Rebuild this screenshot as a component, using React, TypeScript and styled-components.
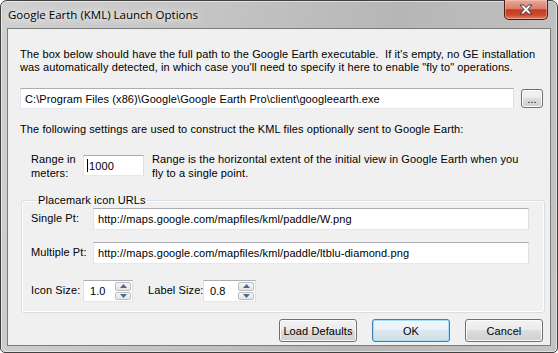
import styled, {createGlobalStyle} from 'styled-components';

const GlobalStyle = createGlobalStyle`
  html, body {
    margin: 0;
    padding: 0;
  }

  body {
    width: 558px;
    height: 353px;
    overflow: hidden;
    background: #ffffff;
    font-family: "Liberation Sans", Arial, sans-serif;
  }
`;

const Window = styled.div`
  box-sizing: border-box;
  width: 558px;
  height: 353px;
  display: flex;
  flex-direction: column;
  border: 1px solid #414141;
  border-radius: 7px 7px 5px 5px;
  padding: 0 6px 6px;
  background: linear-gradient(100deg, #d0d0d0 0%, #c4c4c4 35%, #b6b6b6 65%, #c4c4c4 100%);
  box-shadow: inset 0 0 0 1px rgba(255, 255, 255, 0.5);
`;

const TitleBar = styled.div`
  height: 27px;
  display: flex;
  align-items: center;
  justify-content: space-between;
  padding-left: 1px;
`;

const Title = styled.span`
  font-family: "Open Sans", "Noto Sans", sans-serif;
  font-size: 11.5px;
  color: #000;
  text-shadow: 0 0 6px #fff, 0 0 10px rgba(255, 255, 255, 0.8);
`;

const CloseButton = styled.div`
  align-self: flex-start;
  margin-top: -1px;
  margin-right: 3px;
  box-sizing: border-box;
  width: 44px;
  height: 20px;
  border: 1px solid #4d1a12;
  border-top: none;
  border-radius: 0 0 5px 5px;
  background: linear-gradient(#eaa898 0%, #d8806c 45%, #c23b20 52%, #cf4a2c 80%, #e0876c 100%);
  box-shadow: inset 0 0 0 1px rgba(255, 210, 200, 0.45);
  display: flex;
  align-items: center;
  justify-content: center;
`;

const Client = styled.div`
  flex: 1;
  display: flex;
  flex-direction: column;
  border: 1px solid #7b7b7b;
  background: #f0f0f0;
  padding: 19px 7px 0 12px;
  font-size: 11px;
  letter-spacing: 0.1px;
  color: #000;
`;

const Text = styled.div<{$top?: number}>`
  margin-top: ${p => p.$top ?? 0}px;
  line-height: 13px;
  white-space: pre;
`;

const Row = styled.div<{$top?: number; $indent?: number; $gap?: number; $align?: string}>`
  display: flex;
  align-items: ${p => p.$align ?? 'center'};
  gap: ${p => p.$gap ?? 0}px;
  margin-top: ${p => p.$top ?? 0}px;
  padding-left: ${p => p.$indent ?? 0}px;
`;

const Field = styled.div<{$width?: number; $height?: number; $top?: number}>`
  box-sizing: border-box;
  display: flex;
  align-items: center;
  ${p => (p.$width ? `width: ${p.$width}px;` : 'flex: 1;')}
  height: ${p => p.$height ?? 21}px;
  margin-top: ${p => p.$top ?? 0}px;
  padding: 0 4px;
  background: #fff;
  border: 1px solid;
  border-color: #abadb3 #dbdfe6 #e3e9ef #e2e3ea;
  white-space: pre;
`;

const Caret = styled.span`
  width: 1px;
  height: 13px;
  margin: 0 1px 0 -1px;
  background: #000;
`;

const Button = styled.div<{$width: number; $height?: number; $default?: boolean}>`
  box-sizing: border-box;
  width: ${p => p.$width}px;
  height: ${p => p.$height ?? 23}px;
  display: flex;
  align-items: center;
  justify-content: center;
  border: 1px solid ${p => (p.$default ? '#3c7fb1' : '#707070')};
  border-radius: 3px;
  background: ${p =>
    p.$default
      ? 'linear-gradient(#f1f8fc 0%, #e9f1f6 49%, #dde7ee 50%, #d0dde6 100%)'
      : 'linear-gradient(#f2f2f2 0%, #ebebeb 49%, #dddddd 50%, #cfcfcf 100%)'};
  box-shadow: inset 0 0 0 1px ${p => (p.$default ? '#a6def7' : '#fbfbfb')};
`;

const Label = styled.div<{$width: number; $left?: number}>`
  width: ${p => p.$width}px;
  margin-left: ${p => p.$left ?? 0}px;
  flex: none;
  line-height: 13.5px;
  white-space: nowrap;
`;

const GroupBox = styled.fieldset`
  margin: 14px -2px 0 1px;
  padding: 0 15px 10px 9px;
  border: 1px solid #d5dfe5;
  border-radius: 3px;
  box-shadow: inset 0 0 0 1px #fff;
`;

const Legend = styled.legend`
  margin-left: 6px;
  padding: 0 1px;
  line-height: 13px;
`;

const Spinner = styled.div<{$width: number}>`
  box-sizing: border-box;
  width: ${p => p.$width}px;
  height: 22px;
  display: flex;
  align-items: stretch;
  background: #fff;
  border: 1px solid;
  border-color: #abadb3 #dbdfe6 #e3e9ef #e2e3ea;
`;

const SpinValue = styled.div`
  flex: 1;
  display: flex;
  align-items: center;
  padding-left: 6px;
`;

const SpinArrows = styled.div`
  width: 16px;
  display: flex;
  flex-direction: column;
  gap: 1px;
  padding: 1px;
`;

const SpinArrow = styled.div`
  flex: 1;
  display: flex;
  align-items: center;
  justify-content: center;
  border: 1px solid #bdbdbd;
  border-radius: 2px;
  background: linear-gradient(#f6f6f6, #e4e4e4);
`;

const ButtonRow = styled.div`
  display: flex;
  justify-content: flex-end;
  gap: 15px;
  margin-top: 6px;
`;

function CloseGlyph() {
  return (
    <svg width="14" height="11" viewBox="0 0 14 11">
      <path
        d="M1 1 H4.5 L7 3.6 L9.5 1 H13 L9 5.5 L13 10 H9.5 L7 7.4 L4.5 10 H1 L5 5.5 Z"
        fill="#fff"
        stroke="#3a3a4a"
        strokeWidth="1"
        strokeLinejoin="round"
      />
    </svg>
  );
}

function Arrow({up}: {up?: boolean}) {
  return (
    <svg width="7" height="4" viewBox="0 0 7 4">
      <path d={up ? 'M0 4 L3.5 0 L7 4 Z' : 'M0 0 L3.5 4 L7 0 Z'} fill="#4c6892" />
    </svg>
  );
}

function NumberBox({value, width}: {value: string; width: number}) {
  return (
    <Spinner $width={width}>
      <SpinValue>{value}</SpinValue>
      <SpinArrows>
        <SpinArrow>
          <Arrow up />
        </SpinArrow>
        <SpinArrow>
          <Arrow />
        </SpinArrow>
      </SpinArrows>
    </Spinner>
  );
}

function App() {
  return (
    <>
      <GlobalStyle />
      <Window>
        <TitleBar>
          <Title>Google Earth (KML) Launch Options</Title>
          <CloseButton>
            <CloseGlyph />
          </CloseButton>
        </TitleBar>
        <Client>
          <Text>
            {'The box below should have the full path to the Google Earth executable.  If it\'s empty, no GE installation'}
            <br />
            {'was automatically detected, in which case you\'ll need to specify it here to enable "fly to" operations.'}
          </Text>

          <Row $top={14} $gap={7}>
            <Field>{'C:\\Program Files (x86)\\Google\\Google Earth Pro\\client\\googleearth.exe'}</Field>
            <Button $width={22} $height={19}>...</Button>
          </Row>

          <Text $top={14}>
            The following settings are used to construct the KML files optionally sent to Google Earth:
          </Text>

          <Row $top={17} $indent={11} $align="flex-start">
            <Label $width={52}>
              Range in
              <br />
              meters:
            </Label>
            <Field $width={61} $top={2}>
              <Caret />
              1000
            </Field>
            <Label $width={380} $left={8}>
              Range is the horizontal extent of the initial view in Google Earth when you
              <br />
              fly to a single point.
            </Label>
          </Row>

          <GroupBox>
            <Legend>Placemark icon URLs</Legend>
            <Row $top={1}>
              <Label $width={62}>Single Pt:</Label>
              <Field $height={22}>http://maps.google.com/mapfiles/kml/paddle/W.png</Field>
            </Row>
            <Row $top={12}>
              <Label $width={62}>Multiple Pt:</Label>
              <Field $height={22}>http://maps.google.com/mapfiles/kml/paddle/ltblu-diamond.png</Field>
            </Row>
            <Row $top={16}>
              <Label $width={52}>Icon Size:</Label>
              <NumberBox value="1.0" width={50} />
              <Label $width={55} $left={15}>
                Label Size:
              </Label>
              <NumberBox value="0.8" width={53} />
            </Row>
          </GroupBox>

          <ButtonRow>
            <Button $width={78}>Load Defaults</Button>
            <Button $width={78} $default>
              OK
            </Button>
            <Button $width={78}>Cancel</Button>
          </ButtonRow>
        </Client>
      </Window>
    </>
  );
}

export default App;
